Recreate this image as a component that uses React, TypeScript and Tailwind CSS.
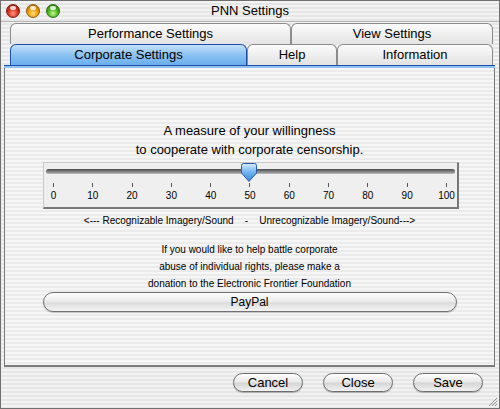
const stripes =
  "bg-[repeating-linear-gradient(180deg,#f2f2f2_0px,#f2f2f2_2px,#e6e6e6_2px,#e6e6e6_4px)]";

function Light({ color }: { color: "red" | "amber" | "green" }) {
  const cls =
    color === "red"
      ? "bg-[radial-gradient(circle_at_50%_70%,#ff9a8a_0%,#e0321f_45%,#8a1208_100%)] border-[#7a1a12]"
      : color === "amber"
      ? "bg-[radial-gradient(circle_at_50%_70%,#ffe08a_0%,#f0a000_45%,#9a5a00_100%)] border-[#8a5a10]"
      : "bg-[radial-gradient(circle_at_50%_70%,#c8f59a_0%,#4cb81c_45%,#1f6a08_100%)] border-[#2a6a12]";
  return (
    <div className={`relative w-[14px] h-[14px] rounded-full border ${cls}`}>
      <div className="absolute left-[3px] top-[1px] w-[6px] h-[4px] rounded-full bg-white/80" />
    </div>
  );
}

function BackTab({ label, width }: { label: string; width: string }) {
  return (
    <div
      className={`${width} h-[21px] flex items-center justify-center rounded-t-[6px] border border-b-0 border-[#8c8c8c] bg-[linear-gradient(180deg,#fbfbfb,#e4e4e4)] text-[13px] text-black`}
    >
      {label}
    </div>
  );
}

function FrontTab({ label, width, active }: { label: string; width: string; active?: boolean }) {
  return (
    <div
      className={`${width} h-[21px] flex items-center justify-center rounded-t-[6px] border border-b-0 text-[13px] text-black ${
        active
          ? "border-[#1f4fa8] bg-[linear-gradient(180deg,#c4e0fa,#8cc2f2_50%,#6aaeee)]"
          : "border-[#8c8c8c] bg-[linear-gradient(180deg,#fbfbfb,#e2e2e2)]"
      }`}
    >
      {label}
    </div>
  );
}

function PillButton({ label, width }: { label: string; width: string }) {
  return (
    <button
      className={`${width} h-[19px] rounded-full border border-[#6e6e6e] bg-[linear-gradient(180deg,#ffffff,#e9e9e9_45%,#d6d6d6_55%,#f2f2f2)] text-[13px] leading-none text-black shadow-[0_1px_1px_rgba(0,0,0,0.25)]`}
    >
      {label}
    </button>
  );
}

export default function App() {
  const ticks = [0, 10, 20, 30, 40, 50, 60, 70, 80, 90, 100];
  return (
    <div
      className={`w-[500px] h-[409px] flex flex-col border border-[#707070] ${stripes} overflow-hidden`}
      style={{ fontFamily: '"Liberation Sans", Arial, sans-serif' }}
    >
      {/* title bar */}
      <div className="relative h-[21px] flex items-center border-b border-[#b4b4b4]">
        <div className="flex items-center gap-[6px] pl-[5px]">
          <Light color="red" />
          <Light color="amber" />
          <Light color="green" />
        </div>
        <div className="absolute inset-0 flex items-center justify-center text-[13px] text-black">
          PNN Settings
        </div>
      </div>

      {/* tabs */}
      <div className="pl-[9px] pr-[6px] pt-[1px]">
        <div className="flex">
          <BackTab label="Performance Settings" width="w-[281px]" />
          <BackTab label="View Settings" width="w-[202px]" />
        </div>
        <div className="flex">
          <FrontTab label="Corporate Settings" width="w-[237px]" active />
          <FrontTab label="Help" width="w-[90px]" />
          <FrontTab label="Information" width="w-[156px]" />
        </div>
      </div>

      {/* panel */}
      <div className="ml-[3px] mr-[4px] h-[302px] flex flex-col border border-t-0 border-[#7a7a7a] border-b-[2px]">
        <div className="h-[3px] border-t border-[#1f4fa8] bg-[#8fc2f2] -mx-px" />
        <div className="flex-1 flex flex-col items-center bg-[repeating-linear-gradient(180deg,#f6f6f6_0px,#f6f6f6_2px,#ebebeb_2px,#ebebeb_4px)]">
          <div className="mt-[53px] text-center text-[13px] leading-[19px] text-black">
            <div>A measure of your willingness</div>
            <div>to cooperate with corporate censorship.</div>
          </div>

          {/* slider box */}
          <div className="mt-[3px] ml-[2px] w-[416px] h-[47px] border-t border-l border-[#c8c8c8] border-r-2 border-b-2 border-r-[#777] border-b-[#777] bg-[#efefef] relative">
            <div className="mx-[2px] mt-[6px] h-[5px] rounded-full bg-[linear-gradient(180deg,#4a4a4a,#8a8a8a_60%,#bdbdbd)]" />
            <svg
              className="absolute left-[197px] top-0"
              width="16"
              height="19"
              viewBox="0 0 16 19"
            >
              <defs>
                <linearGradient id="th" x1="0" y1="0" x2="0" y2="1">
                  <stop offset="0" stopColor="#d6ecff" />
                  <stop offset="0.5" stopColor="#6fb2ef" />
                  <stop offset="1" stopColor="#3a86d8" />
                </linearGradient>
              </defs>
              <path
                d="M2.5 0.5 H13.5 Q15.5 0.5 15.5 2.5 V10 L8 18.5 L0.5 10 V2.5 Q0.5 0.5 2.5 0.5 Z"
                fill="url(#th)"
                stroke="#2a5aa8"
              />
            </svg>
            <div className="flex justify-between mt-[9px]">
              {ticks.map((t) => (
                <div key={t} className="w-[20px] flex flex-col items-center">
                  <div className="w-px h-[4px] bg-[#555]" />
                  <div className="mt-[4px] text-[10px] leading-none text-black">{t}</div>
                </div>
              ))}
            </div>
          </div>

          <div className="mt-[4px] text-[10px] text-black whitespace-pre">
            {"<--- Recognizable Imagery/Sound    -    Unrecognizable Imagery/Sound--->"}
          </div>

          <div className="mt-[13px] text-center text-[10px] leading-[17px] text-black">
            <div>If you would like to help battle corporate</div>
            <div>abuse of individual rights, please make a</div>
            <div>donation to the Electronic Frontier Foundation</div>
          </div>

          <button className="w-[414px] h-[20px] rounded-full border border-[#707070] bg-[linear-gradient(180deg,#fdfdfd,#ececec_45%,#dcdcdc_55%,#f4f4f4)] text-[12px] text-black shadow-[0_1px_1px_rgba(0,0,0,0.2)]">
            PayPal
          </button>
        </div>
      </div>

      {/* bottom buttons */}
      <div className="relative flex-1 flex justify-end items-start gap-[20px] pr-[16px] pt-[6px]">
        <PillButton label="Cancel" width="w-[70px]" />
        <PillButton label="Close" width="w-[70px]" />
        <PillButton label="Save" width="w-[70px]" />
        <svg className="absolute right-[1px] bottom-[1px]" width="11" height="11" viewBox="0 0 11 11">
          <path d="M10 2 L2 10 M10 5 L5 10 M10 8 L8 10" stroke="#8a8a8a" strokeWidth="1" />
        </svg>
      </div>
    </div>
  );
}
